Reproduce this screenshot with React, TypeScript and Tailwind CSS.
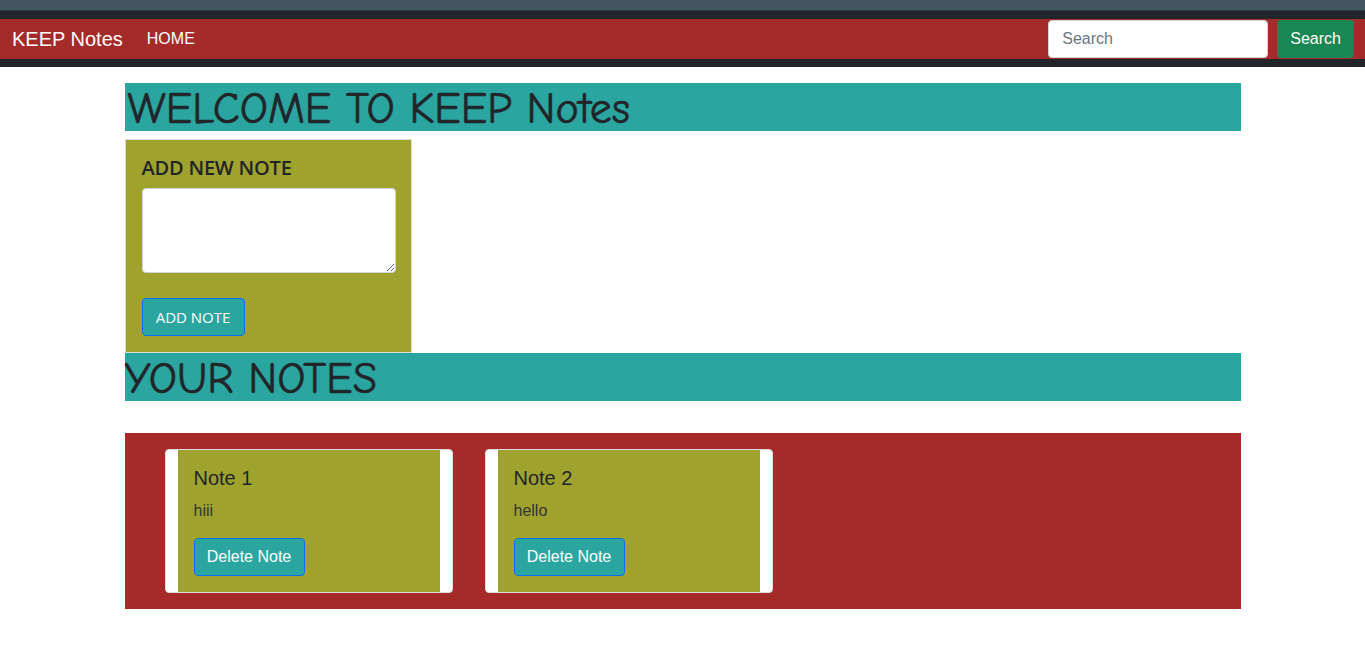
const notes = [
  { id: 1, title: 'Note 1', body: 'hiii' },
  { id: 2, title: 'Note 2', body: 'hello' },
];

const headingFont = { fontFamily: '"Comic Sans MS", "Comic Neue", Lato, sans-serif' };

const App = () => {
  return (
    <div className="min-h-screen bg-white text-[#212529]" style={{ fontFamily: '"Liberation Sans", Arial, sans-serif' }}>
      {/* Top bar */}
      <div className="h-[11px] bg-[#44555f] border-b border-[#2f3b42]" />
      <nav className="bg-[#212529] py-[8px]">
        <div className="flex h-[40px] items-center bg-[#a52a2a] pl-[12px] pr-[11px]">
          <a className="text-[20px] text-white mr-[24px]">KEEP Notes</a>
          <a className="text-[16px] text-white">HOME</a>
          <div className="ml-auto flex items-center gap-[9px]">
            <input
              type="text"
              placeholder="Search"
              className="h-[38px] w-[220px] rounded-[4px] border border-[#ced4da] bg-white px-[13px] text-[16px] text-[#212529] placeholder:text-[#6c757d] outline-none"
            />
            <button className="h-[38px] rounded-[4px] bg-[#198754] px-[13px] text-[16px] text-white">Search</button>
          </div>
        </div>
      </nav>

      <main className="mx-auto mt-[16px] w-[1116px]">
        <h1 className="h-[48px] bg-[#2aa5a0] pl-[3px] text-[44px] leading-[52px] text-[#212529] [-webkit-text-stroke:0.6px_#212529]" style={headingFont}>
          WELCOME TO KEEP Notes
        </h1>

        {/* Add note card */}
        <div
          className="mt-[8px] flex w-[287px] flex-col border border-[#dcdcdc] bg-[#a0a22e] px-[16px] pt-[16px] pb-[16px]"
          style={{ fontFamily: '"Open Sans", "Noto Sans", sans-serif' }}
        >
          <h5 className="text-[20px] font-semibold leading-[24px] tracking-[-0.2px]">ADD NEW NOTE</h5>
          <textarea className="mt-[8px] h-[85px] w-[254px] rounded-[4px] border border-[#ced4da] bg-white" />
          <button className="mt-[25px] h-[38px] w-[103px] rounded-[4px] border border-[#0d6efd] bg-[#2aa5a0] text-[15px] text-white">
            ADD NOTE
          </button>
        </div>

        <h2 className="h-[48px] bg-[#2aa5a0] text-[44px] leading-[52px] text-[#212529] [-webkit-text-stroke:0.6px_#212529]" style={headingFont}>
          YOUR NOTES
        </h2>

        {/* Notes list */}
        <div className="mt-[32px] flex gap-[32px] bg-[#a52a2a] px-[40px] py-[16px]">
          {notes.map((note) => (
            <div key={note.id} className="flex h-[144px] w-[288px] rounded-[4px] border border-[#dcdcdc] bg-white px-[12px]">
              <div className="flex flex-1 flex-col items-start bg-[#a0a22e] px-[16px] pt-[16px]">
                <h5 className="text-[20px] leading-[24px]">{note.title}</h5>
                <p className="mt-[11px] text-[16px] leading-[20px] text-[#333]">{note.body}</p>
                <button className="mt-[17px] h-[38px] w-[111px] rounded-[4px] border border-[#0d6efd] bg-[#2aa5a0] text-[16px] text-white">
                  Delete Note
                </button>
              </div>
            </div>
          ))}
        </div>
      </main>
    </div>
  );
};

export default App;
